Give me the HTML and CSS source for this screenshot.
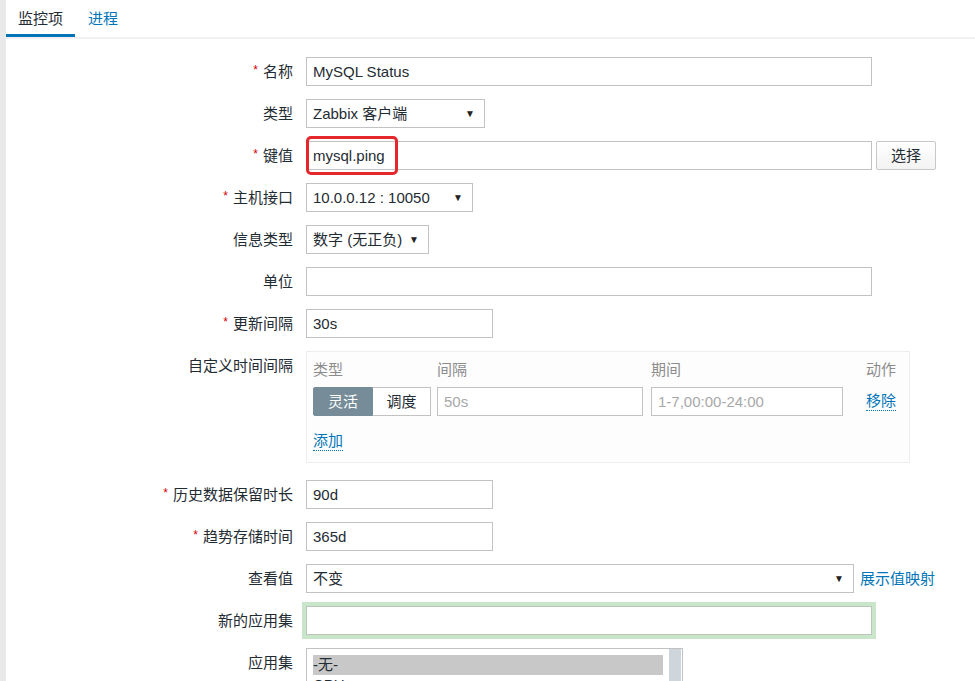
FILE: index.html
```html
<!DOCTYPE html>
<html lang="zh-CN">
<head>
  <meta charset="UTF-8">
  <title>监控项</title>
  <link rel="stylesheet" href="styles.css">
</head>
<body>
  <div class="page">
    <div class="tabs">
      <span class="tab active">监控项</span>
      <span class="tab">进程</span>
    </div>

    <div class="form">
      <label class="label"><span class="req">*</span>名称</label>
      <div class="field"><div class="input w-wide">MySQL Status</div></div>

      <label class="label">类型</label>
      <div class="field"><div class="select w-type">Zabbix 客户端<span class="arrow">▼</span></div></div>

      <label class="label"><span class="req">*</span>键值</label>
      <div class="field key">
        <div class="input w-wide">mysql.ping</div>
        <button class="btn">选择</button>
        <div class="mark"></div>
      </div>

      <label class="label"><span class="req">*</span>主机接口</label>
      <div class="field"><div class="select w-iface">10.0.0.12 : 10050<span class="arrow">▼</span></div></div>

      <label class="label">信息类型</label>
      <div class="field"><div class="select w-info">数字 (无正负)<span class="arrow">▼</span></div></div>

      <label class="label">单位</label>
      <div class="field"><div class="input w-wide"></div></div>

      <label class="label"><span class="req">*</span>更新间隔</label>
      <div class="field"><div class="input w-short">30s</div></div>

      <label class="label">自定义时间间隔</label>
      <div class="field intervals-row">
        <div class="intervals">
          <div class="iv-grid">
            <span class="iv-head">类型</span>
            <span class="iv-head">间隔</span>
            <span class="iv-head">期间</span>
            <span class="iv-head">动作</span>

            <div class="seg">
              <span class="seg-btn on">灵活</span>
              <span class="seg-btn">调度</span>
            </div>
            <div class="input ph w-iv">50s</div>
            <div class="input ph w-period">1-7,00:00-24:00</div>
            <a class="link dotted">移除</a>
          </div>
          <a class="link dotted add">添加</a>
        </div>
      </div>

      <label class="label"><span class="req">*</span>历史数据保留时长</label>
      <div class="field"><div class="input w-short">90d</div></div>

      <label class="label"><span class="req">*</span>趋势存储时间</label>
      <div class="field"><div class="input w-short">365d</div></div>

      <label class="label">查看值</label>
      <div class="field">
        <div class="select w-value">不变<span class="arrow">▼</span></div>
        <a class="link">展示值映射</a>
      </div>

      <label class="label">新的应用集</label>
      <div class="field"><div class="input w-wide focus"></div></div>

      <label class="label">应用集</label>
      <div class="field">
        <div class="listbox">
          <div class="options">
            <div class="opt sel">-无-</div>
            <div class="opt">CPU</div>
            <div class="opt">Filesystems</div>
            <div class="opt">General</div>
          </div>
          <div class="scrollbar"></div>
        </div>
      </div>
    </div>
  </div>
</body>
</html>
```

FILE: styles.css
```css
body {
  margin: 0;
  background: #fff;
  color: #1f2c33;
  font-family: "Liberation Sans", Arial, "Noto Sans CJK SC", sans-serif;
  font-size: 15px;
}

.page {
  border-left: 6px solid #e9e9e9;
  min-height: 100vh;
}

.tabs {
  display: flex;
  height: 37px;
  border-bottom: 2px solid #f0f1f2;
}

.tab {
  padding: 0 12px;
  line-height: 37px;
  color: #0275b8;
}

.tab.active {
  color: #1f2c33;
  box-shadow: inset 0 -3px 0 #0275b8;
  margin-right: 1px;
}

.form {
  display: grid;
  grid-template-columns: 287px 1fr;
  grid-auto-rows: min-content;
  column-gap: 13px;
  row-gap: 13px;
  padding-top: 18px;
}

.label {
  height: 29px;
  text-align: right;
  line-height: 29px;
  white-space: nowrap;
}

.req {
  position: relative;
  top: -3px;
  color: #d40000;
  font-size: 12px;
  margin-right: 5px;
}

.field {
  display: flex;
  align-items: center;
  gap: 6px;
  height: 29px;
  line-height: 29px;
}

.input,
.select {
  box-sizing: border-box;
  height: 29px;
  line-height: 27px;
  border: 1px solid #c2c2c2;
  background: #fff;
  padding: 0 6px;
  white-space: nowrap;
}

.select {
  display: flex;
  justify-content: space-between;
  padding-right: 9px;
}

.arrow {
  font-size: 10px;
  color: #222;
}

.w-wide { width: 566px; }
.w-short { width: 187px; }
.w-type { width: 179px; }
.w-iface { width: 167px; }
.w-info { width: 123px; }
.w-value { width: 548px; }
.w-iv { width: 206px; }
.w-period { width: 192px; }

.ph {
  color: #a8a8a8;
}

.key {
  position: relative;
  gap: 4px;
}

.mark {
  position: absolute;
  left: 0;
  top: -5px;
  width: 92px;
  height: 39px;
  box-sizing: border-box;
  border: 3px solid #e5262b;
  border-radius: 5px;
}

.btn {
  box-sizing: border-box;
  height: 29px;
  width: 60px;
  font: inherit;
  line-height: 27px;
  color: #1f2c33;
  background: linear-gradient(#fff, #f3f3f3);
  border: 1px solid #c8c8c8;
  border-radius: 2px;
  padding: 0;
}

.intervals-row {
  height: auto;
  line-height: normal;
  margin-bottom: 4px;
}

.intervals {
  box-sizing: border-box;
  width: 604px;
  height: 112px;
  border: 1px solid #eceeef;
  background: #fdfdfd;
  padding: 7px 6px 0;
}

.iv-grid {
  display: grid;
  grid-template-columns: 124px 214px 215px auto;
  grid-template-rows: 22px 29px;
  row-gap: 6px;
  align-items: center;
}

.iv-head {
  color: #8c8c8c;
  line-height: 22px;
}

.seg {
  display: flex;
  height: 29px;
}

.seg-btn {
  box-sizing: border-box;
  width: 58px;
  line-height: 27px;
  text-align: center;
  border: 1px solid #c2c2c2;
  border-left: none;
  background: #fff;
}

.seg-btn.on {
  width: 60px;
  color: #fff;
  background: #768d99;
  border: 1px solid #768d99;
  border-radius: 2px 0 0 2px;
}

.link {
  color: #0275b8;
  white-space: nowrap;
}

.dotted {
  border-bottom: 1px dotted #0275b8;
  line-height: 18px;
  justify-self: start;
}

.add {
  display: inline-block;
  margin-top: 16px;
}

.focus {
  box-shadow: 0 0 0 4px #c9e5ca;
  border-color: #b9c7bb;
}

.listbox {
  box-sizing: border-box;
  display: flex;
  width: 377px;
  height: 110px;
  border: 1px solid #c2c2c2;
  overflow: hidden;
  align-self: flex-start;
  line-height: 20px;
}

.options {
  flex: 1;
  padding: 6px 6px 0;
}

.opt {
  line-height: 20px;
}

.opt.sel {
  background: #c8c8c8;
}

.scrollbar {
  width: 12px;
  margin-right: 1px;
  background: #cfd6db;
}
```
